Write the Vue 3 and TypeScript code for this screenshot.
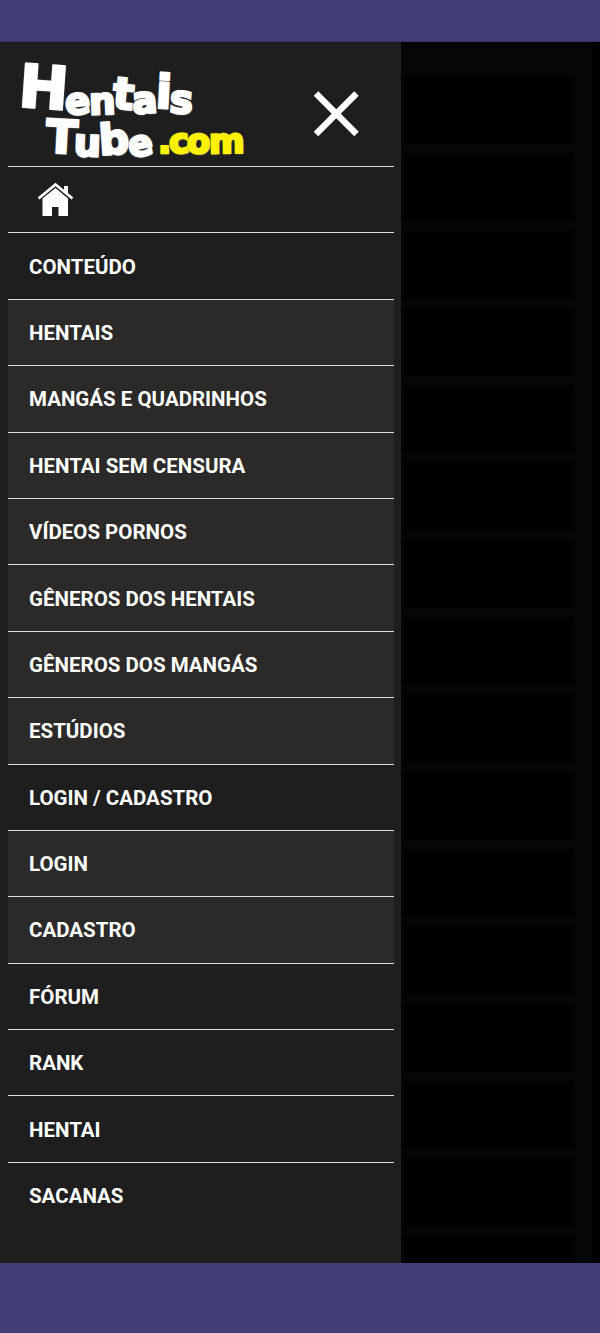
<script setup lang="ts">
interface Glyph { c: string; size: number; rot: number; lift: number; gap: number }
const g = (c: string, size: number, rot: number, lift: number, gap = 0): Glyph => ({ c, size, rot, lift, gap })

const line1: Glyph[] = [
  g('H', 59, 4, 0, 0), g('e', 37, -6, 6, -2), g('n', 37, -2, 6, -1), g('t', 44, 5, 1, -1),
  g('a', 37, -4, 5, -1), g('i', 46, 3, 0, 0), g('s', 39, 4, 5, -1)
]
const line2: Glyph[] = [
  g('T', 46, 3, 0, 0), g('u', 38, 2, 3, -2), g('b', 42, -4, 1, -1), g('e', 36, -10, 3, -1)
]
const line3: Glyph[] = [
  g('.', 35, 0, 0, 0), g('c', 34, -5, 0, -1), g('o', 34, 3, 0, -1), g('m', 34, -1, 0, -1)
]

const menu: { label: string; sub?: boolean }[] = [
  { label: 'CONTEÚDO' },
  { label: 'HENTAIS', sub: true },
  { label: 'MANGÁS E QUADRINHOS', sub: true },
  { label: 'HENTAI SEM CENSURA', sub: true },
  { label: 'VÍDEOS PORNOS', sub: true },
  { label: 'GÊNEROS DOS HENTAIS', sub: true },
  { label: 'GÊNEROS DOS MANGÁS', sub: true },
  { label: 'ESTÚDIOS', sub: true },
  { label: 'LOGIN / CADASTRO' },
  { label: 'LOGIN', sub: true },
  { label: 'CADASTRO', sub: true },
  { label: 'FÓRUM' },
  { label: 'RANK' },
  { label: 'HENTAI' },
  { label: 'SACANAS' }
]

const cards = Array.from({ length: 16 }, (_, i) => i)
const glyphStyle = (x: Glyph) => ({
  fontSize: `${x.size}px`,
  transform: `translateY(${x.lift}px) rotate(${x.rot}deg)`,
  marginLeft: `${x.gap}px`
})
</script>

<template>
  <div class="page">
    <header class="bar bar-top"></header>
    <div class="middle">
      <aside class="drawer">
        <div class="drawer-head">
          <div class="logo" aria-label="HentaisTube.com">
            <div class="logo-line logo-first">
              <span v-for="(x, i) in line1" :key="i" class="glyph" :style="glyphStyle(x)">{{ x.c }}</span>
            </div>
            <div class="logo-line logo-second">
              <span v-for="(x, i) in line2" :key="i" class="glyph" :style="glyphStyle(x)">{{ x.c }}</span>
              <span class="logo-com">
                <span v-for="(x, i) in line3" :key="i" class="glyph yellow" :style="glyphStyle(x)">{{ x.c }}</span>
              </span>
            </div>
          </div>
          <svg class="close" width="48" height="48" viewBox="0 0 48 48" aria-label="Fechar">
            <path d="M4 3.5 L44.5 44 M44.5 3.5 L4 44" stroke="#fff" stroke-width="6.4" fill="none" />
          </svg>
        </div>
        <ul class="menu">
          <li class="row home">
            <svg width="38" height="36" viewBox="0 0 38 36" aria-label="Início">
              <path d="M1.500 16.500 L18.500 2.500 L35.500 16.500" fill="none" stroke="#fff" stroke-width="2.800" />
              <path d="M27 4 H31 V12 L27 8.500 Z" fill="#fff" />
              <path fill-rule="evenodd" d="M5.500 16.500 L18.500 6 L31 16.500 V34 H21.500 V25 H15 V34 H5.500 Z" fill="#fff" />
            </svg>
          </li>
          <li v-for="item in menu" :key="item.label" class="row" :class="{ sub: item.sub }">
            <span class="label">{{ item.label }}</span>
          </li>
        </ul>
      </aside>
      <div class="backdrop">
        <div class="feed">
          <div v-for="c in cards" :key="c" class="card"></div>
        </div>
        <div class="edge"></div>
      </div>
    </div>
    <footer class="bar bar-bottom"></footer>
  </div>
</template>

<style scoped>
.page {
  width: 600px;
  height: 1333px;
  display: flex;
  flex-direction: column;
  overflow: hidden;
  background: #000;
  font-family: Roboto, "Liberation Sans", sans-serif;
}
.bar {
  background: #413d77;
  flex: none;
}
.bar-top {
  height: 42px;
  border-bottom: 1px solid #35325f;
  box-sizing: border-box;
}
.bar-bottom {
  height: 70px;
}
.middle {
  flex: 1;
  min-height: 0;
  display: flex;
}
.drawer {
  width: 401px;
  flex: none;
  background: #1e1e1e;
  padding: 0 7px 0 8px;
  box-sizing: border-box;
}
.drawer-head {
  height: 124px;
  display: flex;
  align-items: flex-start;
  padding-left: 11px;
  box-sizing: border-box;
}
.close {
  margin: 48px 0 0 53px;
}
.logo {
  width: 240px;
  height: 104px;
  display: flex;
  flex-direction: column;
  font-family: "DejaVu Sans", sans-serif;
  font-weight: 700;
  margin-top: 16px;
}
.logo-line {
  display: flex;
  align-items: baseline;
  height: 56px;
  white-space: nowrap;
}
.logo-second {
  padding-left: 27px;
}
.logo-com {
  display: flex;
  align-items: baseline;
  margin-left: 7px;
}
.glyph {
  display: inline-block;
  color: #fff;
  line-height: 1;
  -webkit-text-stroke: 2.5px #fff;
  text-shadow: 0 0 2px #777, 0 0 3px #666, 1px 1px 2px #666;
  letter-spacing: -1px;
}
.yellow {
  color: #fff200;
  -webkit-text-stroke: 2.5px #fff200;
}
.menu {
  list-style: none;
  margin: 0;
  padding: 0;
}
.row {
  height: 66.4px;
  box-sizing: border-box;
  border-top: 1px solid #dcdcdc;
  display: flex;
  align-items: center;
  padding-left: 21px;
  color: #fff;
  font-size: 20.5px;
  font-weight: 700;
  white-space: nowrap;
}
.label {
  padding-top: 1px;
}
.sub {
  background: #2b2a29;
}
.home {
  padding-left: 29px;
}
.backdrop {
  flex: 1;
  min-width: 0;
  display: flex;
  overflow: hidden;
}
.feed {
  width: 191px;
  flex: none;
  background: #060606;
  padding: 34px 17px 0 3px;
  box-sizing: border-box;
  display: flex;
  flex-direction: column;
  gap: 9.3px;
  overflow: hidden;
}
.card {
  height: 68px;
  flex: none;
  background: #000;
}
.edge {
  flex: 1;
  background: #000;
}
</style>
